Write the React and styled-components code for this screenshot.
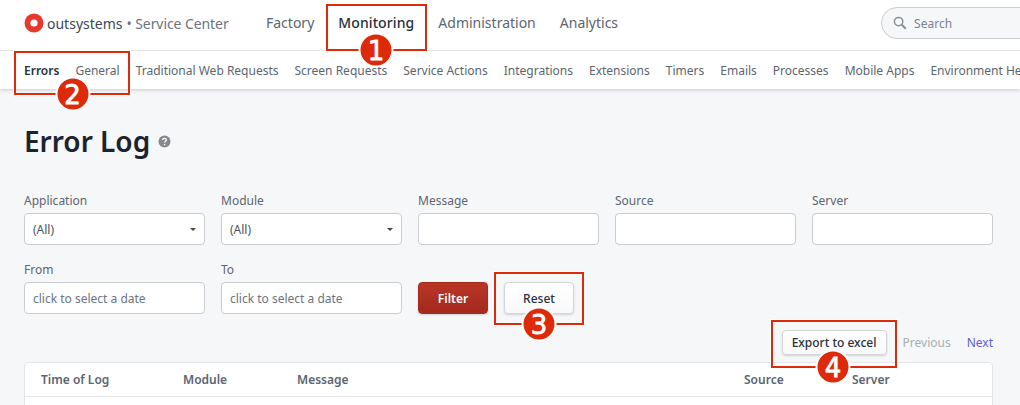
import React from "react";
import styled, { createGlobalStyle } from "styled-components";

const GlobalStyle = createGlobalStyle`
  html, body {
    margin: 0;
    padding: 0;
    width: 1020px;
    height: 405px;
    overflow: hidden;
    background: #f6f7f9;
    font-family: "Noto Sans", "Open Sans", sans-serif;
    color: #1f2630;
  }
  * { box-sizing: border-box; }
`;

const Page = styled.div`
  position: relative;
  width: 1020px;
  height: 405px;
  overflow: hidden;
`;

const Header = styled.header`
  background: #fff;
  box-shadow: 0 1px 4px rgba(30, 40, 60, 0.22);
`;

const TopBar = styled.div`
  display: flex;
  align-items: center;
  height: 51px;
  padding: 0 0 4px 24px;
  border-bottom: 1px solid #e3e5e8;
  white-space: nowrap;
`;

const Logo = styled.div`
  display: flex;
  align-items: center;
  width: 242px;
  flex: none;
`;

const BrandName = styled.span`
  margin-left: 3px;
  font-size: 14px;
  color: #3c4654;
`;

const BrandProduct = styled.span`
  margin-left: 4px;
  font-size: 14px;
  letter-spacing: -0.08px;
  color: #6b7480;
`;

const TopNav = styled.nav`
  display: flex;
  gap: 24px;
  flex: none;
`;

const TopLink = styled.a`
  font-size: 14px;
  line-height: 20px;
  font-weight: ${(p) => (p.$active ? 500 : 400)};
  letter-spacing: ${(p) => (p.$active ? "0.1px" : "0")};
  color: ${(p) => (p.$active ? "#27303c" : "#5c6570")};
`;

const Search = styled.div`
  display: flex;
  align-items: center;
  flex: none;
  width: 240px;
  height: 32px;
  margin-left: 263px;
  padding-left: 11px;
  gap: 7px;
  background: #f6f7f9;
  border: 1px solid #c9ccd1;
  border-radius: 16px;
  font-size: 12px;
  color: #7b838d;
`;

const SubNav = styled.nav`
  display: flex;
  align-items: center;
  gap: 16px;
  height: 38px;
  padding-left: 24px;
  white-space: nowrap;
`;

const SubLink = styled.a`
  flex: none;
  font-size: 12px;
  font-weight: ${(p) => (p.$active ? 600 : 400)};
  color: ${(p) => (p.$active ? "#27303c" : "#5c6570")};
`;

const Content = styled.main`
  padding: 33px 27px 0 24px;
`;

const TitleRow = styled.div`
  display: flex;
  align-items: center;
  gap: 8px;
  height: 38px;
  margin-bottom: 33px;
`;

const Title = styled.h1`
  margin: 0;
  font-size: 28px;
  line-height: 38px;
  font-weight: 600;
  color: #1c232d;
`;

const FilterGrid = styled.div`
  display: grid;
  grid-template-columns: repeat(5, 181px);
  column-gap: 16px;
  row-gap: 17px;
`;

const Field = styled.div`
  display: flex;
  flex-direction: column;
`;

const Label = styled.label`
  font-size: 12px;
  line-height: 16px;
  margin-bottom: 4px;
  color: #5c6570;
`;

const Select = styled.div`
  position: relative;
  height: 32px;
  padding-left: 8px;
  background: #fff;
  border: 1px solid #c9ccd1;
  border-radius: 4px;
  font-size: 12px;
  line-height: 31px;
  color: #4b5460;
  &::after {
    content: "";
    position: absolute;
    right: 8px;
    top: 14px;
    border-left: 3.5px solid transparent;
    border-right: 3.5px solid transparent;
    border-top: 3.5px solid #444;
  }
`;

const TextInput = styled.input`
  height: 32px;
  width: 100%;
  padding: 0 8px;
  background: #fff;
  border: 1px solid #c9ccd1;
  border-radius: 4px;
  font: 12px "Noto Sans", sans-serif;
  color: #4b5460;
  &::placeholder {
    color: #6b7480;
    opacity: 1;
  }
`;

const Actions = styled.div`
  display: flex;
  align-items: flex-end;
  gap: 16px;
`;

const Button = styled.button`
  flex: none;
  width: ${(p) => p.$width || "70px"};
  height: ${(p) => p.$height || "32px"};
  padding: 0;
  border-radius: 4px;
  font: ${(p) => (p.$primary ? 600 : 500)} 12px "Noto Sans", sans-serif;
  border: 1px solid ${(p) => (p.$primary ? "#a62c1f" : "#d3d5d9")};
  color: ${(p) => (p.$primary ? "#fff" : "#27303c")};
  background: ${(p) => (p.$primary ? "linear-gradient(#b93526, #a32a1d)" : "linear-gradient(#fff, #f9f9fa)")};
  box-shadow: 0 1px 2px rgba(30, 40, 60, 0.18);
`;

const Pager = styled.div`
  display: flex;
  align-items: flex-start;
  justify-content: flex-end;
  gap: 16px;
  height: 26px;
  margin-top: 16px;
  font-size: 12px;
  line-height: 25px;
`;

const PagerLink = styled.a`
  color: ${(p) => (p.$disabled ? "#a9aeb5" : "#5a5fd6")};
`;

const Table = styled.div`
  margin-top: 6px;
  height: 60px;
  background: #fff;
  border: 1px solid #e3e5e8;
  border-radius: 4px;
`;

const TableHead = styled.div`
  display: grid;
  grid-template-columns: 142px 114px 447px 108px 1fr;
  align-items: center;
  height: 34px;
  padding-left: 16px;
  border-bottom: 1px solid #e3e5e8;
`;

const HeadCell = styled.div`
  font-size: 12px;
  font-weight: 600;
  color: #5c6570;
`;

const Callout = styled.div`
  position: absolute;
  left: ${(p) => p.$x}px;
  top: ${(p) => p.$y}px;
  width: ${(p) => p.$w}px;
  height: ${(p) => p.$h}px;
  border: 2px solid #dc2a0b;
  outline: 1px solid rgba(255, 255, 255, 0.9);
`;

const Badge = styled.div`
  position: absolute;
  left: ${(p) => p.$cx}px;
  bottom: -1px;
  width: 35px;
  height: 35px;
  transform: translate(-50%, 50%);
  border-radius: 50%;
  background: #dc2a0b;
  border: 2px solid #fff;
  display: flex;
  align-items: center;
  justify-content: center;
  color: #fff;
  font-family: "DejaVu Sans", sans-serif;
  font-size: 26px;
  line-height: 1;
  font-weight: 400;
  -webkit-text-stroke: 0.8px #fff;
`;

const LogoMark = () => (
  <svg width="20" height="20" viewBox="0 0 20 20">
    <circle cx="10" cy="10" r="9.5" fill="#e8392f" />
    <circle cx="10" cy="10" r="3.6" fill="#fff" />
  </svg>
);

const SearchIcon = () => (
  <svg width="14" height="14" viewBox="0 0 14 14" fill="none" stroke="#8a9099" strokeWidth="1.5">
    <circle cx="5.6" cy="5.6" r="4.2" />
    <path d="M8.8 8.8 12.8 12.8" strokeWidth="2" />
  </svg>
);

const HelpIcon = () => (
  <svg width="13" height="13" viewBox="0 0 13 13">
    <circle cx="6.5" cy="6.5" r="6" fill="#85888d" />
    <path d="M4.6 5.1c0-1.1.9-1.7 1.9-1.7s1.9.6 1.9 1.6c0 1.3-1.9 1.3-1.9 2.6" fill="none" stroke="#fff" strokeWidth="1.3" />
    <circle cx="6.5" cy="9.6" r=".8" fill="#fff" />
  </svg>
);

const topLinks = ["Factory", "Monitoring", "Administration", "Analytics"];
const subLinks = [
  "Errors",
  "General",
  "Traditional Web Requests",
  "Screen Requests",
  "Service Actions",
  "Integrations",
  "Extensions",
  "Timers",
  "Emails",
  "Processes",
  "Mobile Apps",
  "Environment Health",
];
const callouts = [
  { n: 1, x: 326, y: 4, w: 101, h: 47, cx: 48 },
  { n: 2, x: 14, y: 51, w: 116, h: 44, cx: 56.5 },
  { n: 3, x: 494, y: 272, w: 90, h: 53, cx: 43 },
  { n: 4, x: 771, y: 320, w: 126, h: 48, cx: 60 },
];

export default function App() {
  return (
    <Page>
      <GlobalStyle />
      <Header>
        <TopBar>
          <Logo>
            <LogoMark />
            <BrandName>outsystems</BrandName>
            <BrandProduct>• Service Center</BrandProduct>
          </Logo>
          <TopNav>
            {topLinks.map((l) => (
              <TopLink key={l} $active={l === "Monitoring"}>
                {l}
              </TopLink>
            ))}
          </TopNav>
          <Search>
            <SearchIcon />
            Search
          </Search>
        </TopBar>
        <SubNav>
          {subLinks.map((l) => (
            <SubLink key={l} $active={l === "Errors"}>
              {l}
            </SubLink>
          ))}
        </SubNav>
      </Header>
      <Content>
        <TitleRow>
          <Title>Error Log</Title>
          <HelpIcon />
        </TitleRow>
        <FilterGrid>
          <Field>
            <Label>Application</Label>
            <Select>(All)</Select>
          </Field>
          <Field>
            <Label>Module</Label>
            <Select>(All)</Select>
          </Field>
          <Field>
            <Label>Message</Label>
            <TextInput />
          </Field>
          <Field>
            <Label>Source</Label>
            <TextInput />
          </Field>
          <Field>
            <Label>Server</Label>
            <TextInput />
          </Field>
          <Field>
            <Label>From</Label>
            <TextInput placeholder="click to select a date" />
          </Field>
          <Field>
            <Label>To</Label>
            <TextInput placeholder="click to select a date" />
          </Field>
          <Actions>
            <Button $primary>Filter</Button>
            <Button>Reset</Button>
          </Actions>
        </FilterGrid>
        <Pager>
          <Button $width="105px" $height="25px">
            Export to excel
          </Button>
          <PagerLink $disabled>Previous</PagerLink>
          <PagerLink>Next</PagerLink>
        </Pager>
        <Table>
          <TableHead>
            <HeadCell>Time of Log</HeadCell>
            <HeadCell>Module</HeadCell>
            <HeadCell>Message</HeadCell>
            <HeadCell>Source</HeadCell>
            <HeadCell>Server</HeadCell>
          </TableHead>
        </Table>
      </Content>
      {callouts.map((c) => (
        <Callout key={c.n} $x={c.x} $y={c.y} $w={c.w} $h={c.h}>
          <Badge $cx={c.cx}>{c.n}</Badge>
        </Callout>
      ))}
    </Page>
  );
}
